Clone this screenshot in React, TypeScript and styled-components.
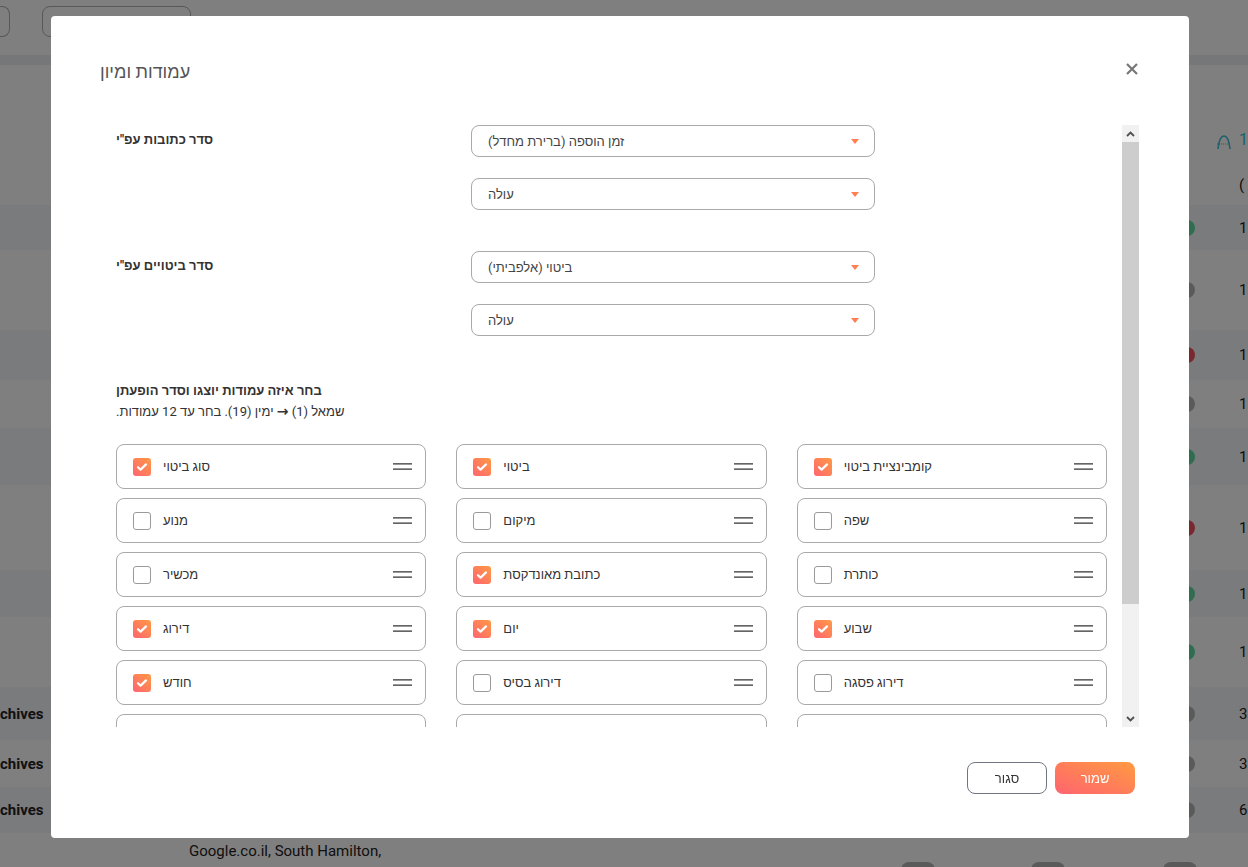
import React from "react";
import styled, { createGlobalStyle } from "styled-components";

const GlobalStyle = createGlobalStyle`
  html, body {
    margin: 0;
    padding: 0;
    background: #ffffff;
    font-family: Roboto, "Liberation Sans", Arial, sans-serif;
    overflow: hidden;
  }
  * { box-sizing: border-box; }
`;

/* ---------- page behind the dialog ---------- */

const Page = styled.div`
  width: 1248px;
  height: 867px;
  overflow: hidden;
  background: #ffffff;
`;

const TopBar = styled.div`
  height: 55px;
  display: flex;
  gap: 32px;
  padding-top: 6px;
`;

const BarButton = styled.div<{ $w: number; $cut?: boolean }>`
  width: ${(p) => p.$w}px;
  height: 31px;
  border: 1px solid #b0b0b0;
  border-left: ${(p) => (p.$cut ? "none" : "1px solid #b0b0b0")};
  border-radius: ${(p) => (p.$cut ? "0 8px 8px 0" : "8px")};
`;

const Band = styled.div`
  height: 10px;
  background: #eceef0;
`;

const Stats = styled.div`
  height: 100px;
  display: flex;
  justify-content: flex-end;
  align-items: flex-end;
  padding-bottom: 15px;
  gap: 7px;
  color: #3bbfd8;
  font-size: 16px;
  line-height: 20px;
`;

const StatNum = styled.span`
  width: 9px;
`;

const Row = styled.div<{ $h: number; $alt?: boolean }>`
  height: ${(p) => p.$h}px;
  display: flex;
  align-items: center;
  background: ${(p) => (p.$alt ? "#f4f6fa" : "#ffffff")};
  color: #222;
  font-size: 14px;
`;

const LeftCell = styled.div`
  width: 42px;
  text-align: right;
  white-space: nowrap;
  font-weight: 700;
  font-size: 15px;
`;

const Spacer = styled.div`
  flex: 1;
`;

const Dot = styled.div<{ $c: string }>`
  width: 16px;
  height: 16px;
  border-radius: 50%;
  background: ${(p) => p.$c};
  margin-right: 42px;
`;

const NumCell = styled.div`
  width: 11px;
  white-space: nowrap;
  font-size: 15px;
  padding-left: 2px;
`;

const LastRow = styled.div`
  height: 34px;
  display: flex;
  align-items: flex-start;
  padding-left: 189px;
  padding-top: 9px;
  color: #222;
  font-size: 15px;
`;

const Pill = styled.div<{ $ml: number }>`
  width: 34px;
  height: 16px;
  border-radius: 8px;
  background: #b4b4b4;
  margin-left: ${(p) => p.$ml}px;
  margin-top: 20px;
`;

/* ---------- dialog ---------- */

const Overlay = styled.div`
  position: fixed;
  inset: 0;
  background: rgba(0, 0, 0, 0.5);
  padding: 16px 0 0 51px;
`;

const Modal = styled.div`
  width: 1138px;
  height: 822px;
  background: #ffffff;
  border-radius: 4px;
  display: flex;
  flex-direction: column;
  color: #333;
  font-size: 13px;
`;

const Header = styled.div`
  height: 109px;
  flex-shrink: 0;
  display: flex;
  justify-content: space-between;
  align-items: flex-start;
  padding: 44px 51px 0 49px;
`;

const Title = styled.h2`
  margin: 0;
  font-size: 18px;
  line-height: 24px;
  font-weight: 400;
  color: #555;
  direction: rtl;
`;

const CloseButton = styled.button`
  border: none;
  background: none;
  padding: 0;
  margin-top: 3px;
  width: 12px;
  height: 12px;
  display: flex;
  cursor: pointer;
`;

const ScrollArea = styled.div`
  height: 602px;
  flex-shrink: 0;
  margin: 0 50px 0 49px;
  display: flex;
`;

const Body = styled.div`
  flex: 1;
  overflow: hidden;
  padding: 0 15px 52px 16px;
`;

const ScrollTrack = styled.div`
  width: 17px;
  flex-shrink: 0;
  background: #f1f1f1;
  display: flex;
  flex-direction: column;
`;

const ScrollButton = styled.div`
  height: 17px;
  flex-shrink: 0;
  display: flex;
  align-items: center;
  justify-content: center;
`;

const ThumbLane = styled.div`
  flex: 1;
`;

const Thumb = styled.div`
  background: #cdcdcd;
`;

const SortGroup = styled.div<{ $mb: number }>`
  display: grid;
  grid-template-columns: 355px 404px;
  align-items: start;
  margin-bottom: ${(p) => p.$mb}px;
`;

const GroupLabel = styled.div`
  direction: rtl;
  text-align: left;
  font-weight: 700;
  line-height: 18px;
  padding-top: 6px;
  color: #333;
`;

const SelectStack = styled.div`
  display: flex;
  flex-direction: column;
  gap: 21px;
`;

const Select = styled.div`
  height: 32px;
  border: 1px solid #a9a9a9;
  border-radius: 8px;
  display: flex;
  align-items: center;
  justify-content: space-between;
  padding: 0 15px 0 16px;
  color: #444;
`;

const Heb = styled.span`
  direction: rtl;
  unicode-bidi: isolate;
`;

const SectionTitle = styled.div`
  direction: rtl;
  text-align: left;
  font-weight: 700;
  line-height: 20px;
  color: #333;
`;

const SectionHint = styled.div`
  direction: rtl;
  text-align: left;
  line-height: 20px;
  color: #333;
  margin-bottom: 22px;
`;

const Arrow = styled.span`
  font-family: "DejaVu Sans", sans-serif;
  font-size: 14px;
  font-weight: 700;
`;

const ColumnsGrid = styled.div`
  display: grid;
  grid-template-columns: repeat(3, 1fr);
  column-gap: 30px;
  row-gap: 9px;
`;

const ColumnItem = styled.div`
  height: 45px;
  border: 1px solid #a9a9a9;
  border-radius: 8px;
  display: flex;
  align-items: center;
  padding: 0 13px 0 16px;
`;

const Check = styled.span<{ $on: boolean }>`
  width: 18px;
  height: 18px;
  border-radius: 3px;
  flex-shrink: 0;
  display: flex;
  align-items: center;
  justify-content: center;
  border: ${(p) => (p.$on ? "none" : "1px solid #9a9a9a")};
  background: ${(p) =>
    p.$on ? "linear-gradient(to top right, #ff6470, #ff9a44)" : "#ffffff"};
`;

const ItemText = styled.span`
  direction: rtl;
  margin-left: 12px;
  flex: 1;
  text-align: left;
  color: #333;
`;

const Footer = styled.div`
  flex: 1;
  display: flex;
  justify-content: flex-end;
  align-items: flex-start;
  gap: 8px;
  padding: 35px 54px 0 0;
`;

const Button = styled.button<{ $primary?: boolean }>`
  width: 80px;
  height: 32px;
  border-radius: 8px;
  font-family: inherit;
  font-size: 13px;
  cursor: pointer;
  border: ${(p) => (p.$primary ? "none" : "1px solid #6f7682")};
  color: ${(p) => (p.$primary ? "#ffffff" : "#333")};
  background: ${(p) =>
    p.$primary ? "linear-gradient(to top right, #ff6470, #ff9a40)" : "#ffffff"};
`;

const rows = [
  { h: 45, alt: true, c: "#5ed9a0", n: "1" },
  { h: 80, alt: false, c: "#b4b4b4", n: "1" },
  { h: 50, alt: true, c: "#f0505c", n: "1" },
  { h: 48, alt: false, c: "#b4b4b4", n: "1" },
  { h: 57, alt: true, c: "#5ed9a0", n: "1" },
  { h: 85, alt: false, c: "#f0505c", n: "1" },
  { h: 47, alt: true, c: "#5ed9a0", n: "1" },
  { h: 70, alt: false, c: "#5ed9a0", n: "1" },
  { h: 53, alt: true, c: "#b4b4b4", n: "3", t: "chives" },
  { h: 47, alt: false, c: "#b4b4b4", n: "3", t: "chives" },
  { h: 46, alt: true, c: "#b4b4b4", n: "6", t: "chives" },
];

const columns: { label: string; on: boolean }[] = [
  { label: "סוג ביטוי", on: true },
  { label: "ביטוי", on: true },
  { label: "קומבינציית ביטוי", on: true },
  { label: "מנוע", on: false },
  { label: "מיקום", on: false },
  { label: "שפה", on: false },
  { label: "מכשיר", on: false },
  { label: "כתובת מאונדקסת", on: true },
  { label: "כותרת", on: false },
  { label: "דירוג", on: true },
  { label: "יום", on: true },
  { label: "שבוע", on: true },
  { label: "חודש", on: true },
  { label: "דירוג בסיס", on: false },
  { label: "דירוג פסגה", on: false },
  { label: "שינוי יומי", on: false },
  { label: "שינוי שבועי", on: false },
  { label: "שינוי חודשי", on: false },
  { label: "נפח חיפוש", on: false },
];

const Caret = () => (
  <svg width="8" height="5" viewBox="0 0 8 5">
    <path d="M0 0h8L4 5z" fill="#ff7f50" />
  </svg>
);

const Handle = () => (
  <svg width="19" height="7" viewBox="0 0 19 7">
    <path d="M0 0.8h19M0 6.2h19" stroke="#333" strokeWidth="1.3" />
  </svg>
);

const Tick = () => (
  <svg width="12" height="10" viewBox="0 0 12 10">
    <path
      d="M2 5.2l2.6 2.4L10 2.4"
      fill="none"
      stroke="#fff"
      strokeWidth="2.2"
      strokeLinecap="round"
      strokeLinejoin="round"
    />
  </svg>
);

const Chevron = ({ up }: { up?: boolean }) => (
  <svg width="9" height="6" viewBox="0 0 9 6">
    <path
      d={up ? "M1 5l3.5-3.5L8 5" : "M1 1l3.5 3.5L8 1"}
      fill="none"
      stroke="#505050"
      strokeWidth="1.8"
    />
  </svg>
);

const ArchIcon = () => (
  <svg width="16" height="16" viewBox="0 0 16 16">
    <path d="M2 15C3 6 5 2 8 2s5 4 6 13" fill="none" stroke="#3bbfd8" strokeWidth="1.6" />
    <path d="M1 10h14" stroke="#3bbfd8" strokeWidth="1" strokeDasharray="1 1" />
  </svg>
);

const SortSelects = ({ first, second }: { first: string; second: string }) => (
  <SelectStack>
    <Select>
      <Heb>{first}</Heb>
      <Caret />
    </Select>
    <Select>
      <Heb>{second}</Heb>
      <Caret />
    </Select>
  </SelectStack>
);

const App = () => {
  // visible part / full content height of the scroll area
  const thumbRatio = 602 / 740;
  return (
    <>
      <GlobalStyle />
      <Page>
        <TopBar>
          <BarButton $w={10} $cut />
          <BarButton $w={149} />
        </TopBar>
        <Band />
        <Stats>
          <ArchIcon />
          <StatNum>1</StatNum>
        </Stats>
        <Row $h={40}>
          <Spacer />
          <NumCell>(</NumCell>
        </Row>
        {rows.map((r, i) => (
          <Row key={i} $h={r.h} $alt={r.alt}>
            <LeftCell>{r.t ?? ""}</LeftCell>
            <Spacer />
            <Dot $c={r.c} />
            <NumCell>{r.n}</NumCell>
          </Row>
        ))}
        <LastRow>
          Google.co.il, South Hamilton,
          <Pill $ml={520} />
          <Pill $ml={96} />
          <Pill $ml={98} />
        </LastRow>
      </Page>

      <Overlay>
        <Modal>
          <Header>
            <Title>עמודות ומיון</Title>
            <CloseButton aria-label="close">
              <svg width="12" height="12" viewBox="0 0 12 12">
                <path d="M1 1l10 10M11 1L1 11" stroke="#777" strokeWidth="2.2" />
              </svg>
            </CloseButton>
          </Header>

          <ScrollArea>
            <Body>
              <SortGroup $mb={41}>
                <GroupLabel>סדר כתובות עפ"י</GroupLabel>
                <SortSelects first="זמן הוספה (ברירת מחדל)" second="עולה" />
              </SortGroup>
              <SortGroup $mb={45}>
                <GroupLabel>סדר ביטויים עפ"י</GroupLabel>
                <SortSelects first="ביטוי (אלפביתי)" second="עולה" />
              </SortGroup>

              <SectionTitle>בחר איזה עמודות יוצגו וסדר הופעתן</SectionTitle>
              <SectionHint>
                שמאל (1) <Arrow>→</Arrow> ימין (19). בחר עד 12 עמודות.
              </SectionHint>

              <ColumnsGrid>
                {columns.map((c) => (
                  <ColumnItem key={c.label}>
                    <Check $on={c.on}>{c.on && <Tick />}</Check>
                    <ItemText>{c.label}</ItemText>
                    <Handle />
                  </ColumnItem>
                ))}
              </ColumnsGrid>
            </Body>
            <ScrollTrack>
              <ScrollButton>
                <Chevron up />
              </ScrollButton>
              <ThumbLane>
                <Thumb style={{ height: `${thumbRatio * 100}%` }} />
              </ThumbLane>
              <ScrollButton>
                <Chevron />
              </ScrollButton>
            </ScrollTrack>
          </ScrollArea>

          <Footer>
            <Button>סגור</Button>
            <Button $primary>שמור</Button>
          </Footer>
        </Modal>
      </Overlay>
    </>
  );
};

export default App;
